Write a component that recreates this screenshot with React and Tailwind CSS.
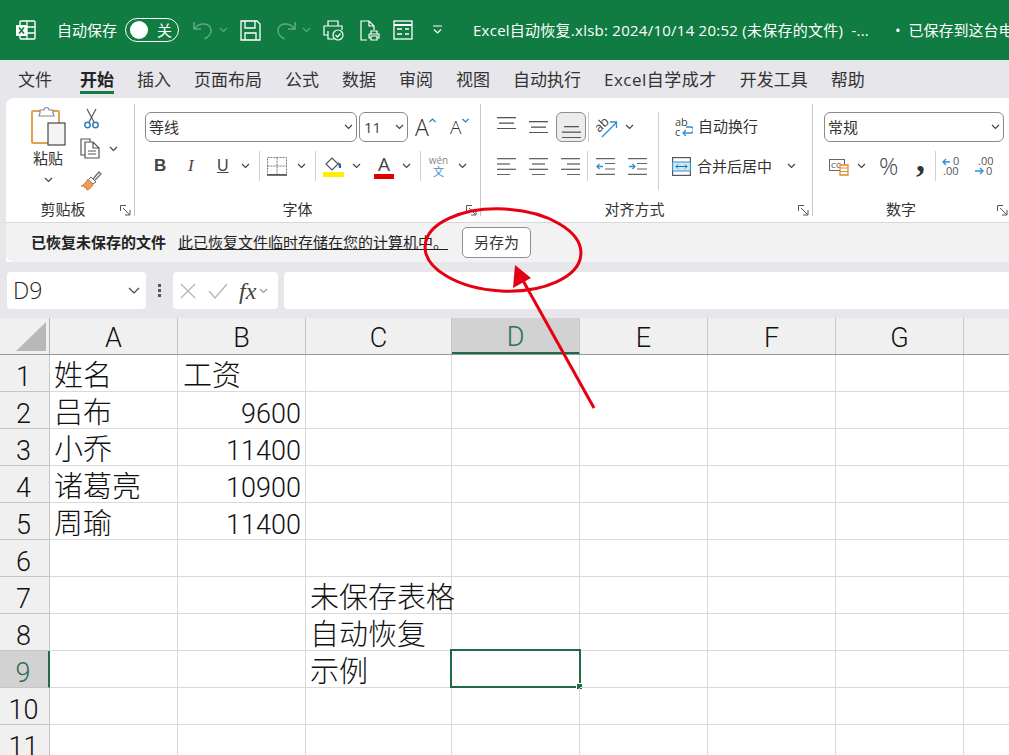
import React from "react";

const columns = ["A", "B", "C", "D", "E", "F", "G", ""];
const rows = [
    {n: 1, a: "姓名", b: "工资"},
    {n: 2, a: "吕布", b: "9600"},
    {n: 3, a: "小乔", b: "11400"},
    {n: 4, a: "诸葛亮", b: "10900"},
    {n: 5, a: "周瑜", b: "11400"},
    {n: 6},
    {n: 7, c: "未保存表格"},
    {n: 8, c: "自动恢复"},
    {n: 9, c: "示例"},
    {n: 10},
    {n: 11}
];
const tabs = ["文件", "开始", "插入", "页面布局", "公式", "数据", "审阅", "视图", "自动执行", "Excel自学成才", "开发工具", "帮助"];
const colWidths = ["w-[128px]", "w-[128px]", "w-[146px]", "w-[128px]", "w-[128px]", "w-[128px]", "w-[128px]", "w-[128px]"];

function Chev({className = "", color = "#444"}) {
    return (
        <svg width="9" height="6" viewBox="0 0 9 6" className={`shrink-0 ${className}`} fill="none">
            <path d="M1 1l3.5 3.5L8 1" stroke={color} strokeWidth="1.2"/>
        </svg>
    );
}

function Lines({widths, className = "", color = "#555", height = 17}) {
    // alignment icons are just stacks of lines
    return (
        <svg width="19" height={height} viewBox={`0 0 19 ${height}`} className={className}>
            {widths.map((l, i) => (
                <rect key={i} x={l[0]} y={i * ((height - 1) / (widths.length - 1))} width={l[1]} height="1.3" fill={color}/>
            ))}
        </svg>
    );
}

function Launcher() {
    return (
        <svg width="11" height="11" viewBox="0 0 11 11" fill="none" stroke="#555">
            <path d="M.5 6V.5H6"/>
            <path d="M3 3l6.5 6.5M10 5v5H5"/>
        </svg>
    );
}

function Group({title, width, children, label, launcher = "mr-[3px]"}) {
    return (
        <div className={`${width} mt-[6px] h-[112px] shrink-0 flex flex-col border-r border-[#c8c8c8] pt-[8px]`}>
            <div className="flex-1 min-h-0 flex">{children}</div>
            <div className={`relative h-[18px] flex items-center justify-center text-[15px] leading-[18px] text-[#333] top-[2px] ${label}`}>
                {title}
                <span className={`absolute right-0 top-[5px] flex ${launcher}`}><Launcher/></span>
            </div>
        </div>
    );
}

function Sep() {
    return <div className="w-px h-[30px] bg-[#d0d0d0] shrink-0"/>;
}

function TitleBar() {
    return (
        <div className="h-[60px] bg-[#107c41] flex items-center text-white text-[15px] whitespace-nowrap overflow-hidden shrink-0">
            <svg width="22" height="22" viewBox="0 0 22 22" className="ml-[15px] shrink-0">
                <rect x="5" y="2" width="15" height="18" rx="1" fill="none" stroke="#fff" strokeWidth="1.4"/>
                <path d="M12 2v18M12 8h8M12 14h8" stroke="#fff" strokeWidth="1.3"/>
                <rect x="1" y="6" width="11" height="11" rx="1" fill="#fff"/>
                <path d="M4 8.500l5 6M9 8.500l-5 6" stroke="#107c41" strokeWidth="1.6"/>
            </svg>
            <span className="ml-[20px] shrink-0">自动保存</span>
            <div className="ml-[8px] w-[54px] h-[24px] rounded-full border border-white flex items-center shrink-0">
                <div className="ml-[4px] w-[18px] h-[18px] rounded-full bg-white"/>
                <span className="ml-[9px] text-[15px]">关</span>
            </div>
            <svg width="20" height="20" viewBox="0 0 20 20" fill="none" stroke="#5fa883" strokeWidth="1.5" className="ml-[14px] shrink-0">
                <path d="M1 2v7h7M1.500 9C5 3 15 2 17.500 8c1.800 5-2 9-6 11"/>
            </svg>
            <Chev className="ml-[6px]" color="#5fa883"/>
            <svg width="21" height="21" viewBox="0 0 21 21" fill="none" stroke="#fff" strokeWidth="1.3" className="ml-[12px] shrink-0">
                <path d="M1 1h16l3 3v16H1z"/>
                <path d="M5 1v7h10V1M5 20v-7h11v7"/>
            </svg>
            <svg width="20" height="20" viewBox="0 0 20 20" fill="none" stroke="#5fa883" strokeWidth="1.5" className="ml-[15px] shrink-0">
                <path d="M19 2v7h-7M18.500 9C15 3 5 2 2.500 8c-1.800 5 2 9 6 11"/>
            </svg>
            <Chev className="ml-[6px]" color="#5fa883"/>
            <svg width="21" height="21" viewBox="0 0 21 21" fill="none" stroke="#fff" strokeWidth="1.2" className="ml-[12px] shrink-0">
                <path d="M5 6V1h10v5M5 15H1V6h18v4M5 11v8h6"/>
                <circle cx="15" cy="15" r="5"/>
                <path d="M12.500 15l2 2 3-3.500"/>
            </svg>
            <svg width="20" height="21" viewBox="0 0 20 21" fill="none" stroke="#fff" strokeWidth="1.2" className="ml-[16px] shrink-0">
                <path d="M7 20H1V1h8l5 5v4M9 1v5h5"/>
                <path d="M9 14h10v4h-2M9 14v4h2M11 11h6v3h-6zM11 16h6v4h-6z"/>
            </svg>
            <svg width="20" height="20" viewBox="0 0 20 20" fill="none" stroke="#fff" strokeWidth="1.3" className="ml-[13px] shrink-0">
                <rect x="1" y="1" width="18" height="18"/>
                <path d="M1 5h18" strokeWidth="2"/>
                <path d="M4 9h5M12 9h4M4 14h5M12 14h4"/>
            </svg>
            <svg width="11" height="10" viewBox="0 0 11 10" fill="none" stroke="#fff" strokeWidth="1.1" className="ml-[19px] shrink-0">
                <path d="M1 1h9M2 4.500l3.500 3.500L9 4.500"/>
            </svg>
            <span className="ml-[30px] shrink-0 tracking-[0.25px]">Excel自动恢复.xlsb: 2024/10/14 20:52 (未保存的文件)&nbsp; -...</span>
            <span className="ml-[26px] shrink-0">•&nbsp; 已保存到这台电脑</span>
        </div>
    );
}

function TabBar() {
    return (
        <div className="h-[38px] pl-[18px] flex gap-[23px] text-[17px] text-[#333] shrink-0 whitespace-nowrap">
            {tabs.map(t => (
                <div
                    key={t}
                    className={
                        t === "开始" ? "relative ml-[5px] pt-[7px] font-bold text-[#222]"
                            : t === "Excel自学成才" ? "pt-[7px] tracking-[0.5px]" : "pt-[7px]"
                    }
                >
                    {t}
                    {t === "开始" && <div className="absolute left-0 right-0 top-[31px] h-[3px] bg-[#107c41]"/>}
                </div>
            ))}
        </div>
    );
}

function Clipboard() {
    return (
        <Group title="剪贴板" width="w-[129px]" label="pr-[14px]">
            <div className="w-[74px] flex flex-col items-center -mt-[6px]">
                <svg width="40" height="40" viewBox="0 0 40 40" className="ml-[10px]">
                    <rect x="4" y="5" width="27" height="32" rx="1" fill="#fff" stroke="#e3a04f" strokeWidth="2"/>
                    <path d="M12 7V4h4a2 2 0 0 1 5 0h4v3l1 3H11z" fill="#fff" stroke="#8a8a8a" strokeWidth="1.2"/>
                    <rect x="20" y="17" width="17" height="22" fill="#f4f4f4" stroke="#555" strokeWidth="1.300"/>
                </svg>
                <span className="ml-[10px] text-[15px] leading-[20px] mt-[2px] text-[#333]">粘贴</span>
                <Chev className="ml-[10px] mt-[9px]"/>
            </div>
            <div className="flex flex-col -mt-[4px]">
                <svg width="18" height="21" viewBox="0 0 18 21" fill="none" className="ml-[3px]">
                    <path d="M4 1l7 13M13 1L6 14" stroke="#555" strokeWidth="1.200"/>
                    <circle cx="4.500" cy="17" r="2.700" stroke="#2f7fb8" strokeWidth="1.500"/>
                    <circle cx="12.500" cy="17" r="2.700" stroke="#2f7fb8" strokeWidth="1.500"/>
                </svg>
                <div className="flex items-center mt-[9px]">
                    <svg width="21" height="21" viewBox="0 0 21 21" fill="none" stroke="#555" strokeWidth="1.200">
                        <path d="M5 17H1V1h9v3"/>
                        <path d="M5 4h8l6 6v10H5zM13 4v6h6M8 13h8M8 16h8"/>
                    </svg>
                    <Chev className="ml-[8px]"/>
                </div>
                <svg width="22" height="21" viewBox="0 0 22 21" fill="none" className="mt-[11px]">
                    <path d="M13 9l6-7 2 2-6 6" fill="#fff" stroke="#666" strokeWidth="1.200"/>
                    <path d="M11 7l5 5-3 2-5-4z" fill="#fff" stroke="#666"/>
                    <path d="M8 9l5 6c-2 3-5 5-6 5l-1-3-1 1-1-2-3 0c3-1 5-4 7-7z" fill="#ef9b5a" stroke="#d97a32"/>
                </svg>
            </div>
        </Group>
    );
}

function Font() {
    return (
        <Group title="字体" width="w-[346px]" label="pr-[20px]">
            <div className="flex-1 flex flex-col">
                <div className="flex items-center h-[30px]">
                    <div className="ml-[10px] w-[212px] h-[30px] rounded-[6px] border border-[#8a8a8a] flex items-center justify-between pl-[3px] pr-[3px] text-[15px] text-[#333]">
                        等线<Chev/>
                    </div>
                    <div className="ml-[2px] w-[49px] h-[30px] rounded-[6px] border border-[#8a8a8a] flex items-center justify-between pl-[4px] pr-[3px] text-[15px] text-[#444]">
                        11<Chev/>
                    </div>
                    <span className="ml-[7px] w-[14px] text-[23px] font-light leading-[30px] text-[#333]">A</span>
                    <svg width="7" height="5" viewBox="0 0 7 5" fill="none" stroke="#2f7fb8" strokeWidth="1.200" className="mb-[14px]"><path d="M.5 4l3-3 3 3"/></svg>
                    <span className="ml-[14px] w-[12px] text-[19px] font-light leading-[30px] text-[#333]">A</span>
                    <svg width="7" height="5" viewBox="0 0 7 5" fill="none" stroke="#2f7fb8" strokeWidth="1.200" className="mb-[14px]"><path d="M.5 1l3 3 3-3"/></svg>
                </div>
                <div className="flex items-center h-[30px] mt-[9px] text-[#444]">
                    <span className="ml-[19px] w-[11px] text-[17px] font-bold font-['Liberation_Sans',sans-serif]">B</span>
                    <span className="ml-[23px] w-[8px] text-[17px] italic font-['Liberation_Serif',serif]">I</span>
                    <span className="ml-[21px] w-[12px] text-[16px] underline font-['Liberation_Sans',sans-serif]">U</span>
                    <Chev className="ml-[12px]"/>
                    <div className="ml-[9px]"><Sep/></div>
                    <svg width="20" height="19" viewBox="0 0 20 19" fill="none" stroke="#777" strokeWidth="1" strokeDasharray="2 1" className="ml-[7px]">
                        <path d="M.5.500h19v17H.5zM10 .500v17M.5 9h19"/>
                        <path d="M0 18h20" strokeDasharray="none" stroke="#444" strokeWidth="1.300"/>
                    </svg>
                    <Chev className="ml-[10px]"/>
                    <div className="ml-[9px]"><Sep/></div>
                    <svg width="21" height="21" viewBox="0 0 21 21" className="ml-[7px]">
                        <path d="M3 8l6-6 6 6-6 6z" fill="#fff" stroke="#555" strokeWidth="1.200"/>
                        <path d="M15 6l3 2 0 4h-2z" fill="#1f5fa8"/>
                        <rect x="0" y="16" width="21" height="5" fill="#ffee00"/>
                    </svg>
                    <Chev className="ml-[8px]"/>
                    <div className="ml-[13px] w-[20px] h-[25px] flex flex-col items-center">
                        <span className="text-[19px] leading-[20px] text-[#444]">A</span>
                        <div className="w-[20px] h-[5px] bg-[#e00000]"/>
                    </div>
                    <Chev className="ml-[8px]"/>
                    <div className="ml-[9px]"><Sep/></div>
                    <div className="ml-[8px] w-[19px] flex flex-col items-center leading-none text-[#888]">
                        <span className="text-[10px] leading-[11px]">wén</span>
                        <span className="text-[11px] leading-[12px] text-[#3b8ec9]">文</span>
                    </div>
                    <Chev className="ml-[10px]"/>
                </div>
            </div>
        </Group>
    );
}

function Alignment() {
    return (
        <Group title="对齐方式" width="w-[332px]" label="pr-[24px]">
            <div className="flex-1 flex">
                <div className="w-[178px] shrink-0 flex flex-col border-r border-[#d0d0d0] h-[78px]">
                    <div className="flex items-center h-[30px]">
                        <Lines height={12} className="ml-[16px] mb-[9px]" widths={[[0, 19], [2, 15], [0, 19]]}/>
                        <Lines height={12} className="ml-[13px]" widths={[[0, 19], [2, 15], [0, 19]]}/>
                        <div className="ml-[8px] w-[30px] h-[30px] rounded-[6px] border border-[#8f8f8f] bg-[#ececec] flex items-center justify-center">
                            <Lines height={12} className="mt-[9px]" widths={[[2, 15], [0, 19], [0, 19]]}/>
                        </div>
                        <div className="ml-[2px]"><Sep/></div>
                        <svg width="22" height="22" viewBox="0 0 22 22" fill="none" className="ml-[7px]">
                            <text x="-1" y="13" fontSize="13" fill="#444" transform="rotate(-45 6 10)">ab</text>
                            <path d="M6 21L20 7M14 6h6.500v6" stroke="#2f8fd0" strokeWidth="1.300"/>
                        </svg>
                        <Chev className="ml-[7px]"/>
                    </div>
                    <div className="flex items-center h-[30px] mt-[9px]">
                        <Lines className="ml-[16px]" widths={[[0, 19], [0, 13], [0, 19], [0, 13]]} color="#666"/>
                        <Lines className="ml-[13px]" widths={[[0, 19], [3, 13], [0, 19], [3, 13]]} color="#666"/>
                        <Lines className="ml-[13px]" widths={[[0, 19], [6, 13], [0, 19], [6, 13]]} color="#666"/>
                        <div className="ml-[7px]"><Sep/></div>
                        <svg width="19" height="17" viewBox="0 0 19 17" fill="none" className="ml-[8px]">
                            <path d="M0 .600h19M9 5.500h10M9 11h10M0 16.400h19" stroke="#666" strokeWidth="1.200"/>
                            <path d="M7 8.500H1M3.500 6L1 8.500 3.500 11" stroke="#2f8fd0" strokeWidth="1.300"/>
                        </svg>
                        <svg width="19" height="17" viewBox="0 0 19 17" fill="none" className="ml-[13px]">
                            <path d="M0 .600h19M9 5.500h10M9 11h10M0 16.400h19" stroke="#666" strokeWidth="1.200"/>
                            <path d="M1 8.500h6M4.500 6L7 8.500 4.500 11" stroke="#2f8fd0" strokeWidth="1.300"/>
                        </svg>
                    </div>
                </div>
                <div className="flex-1 flex flex-col text-[15px] text-[#333]">
                    <div className="flex items-center h-[30px]">
                        <svg width="18" height="21" viewBox="0 0 18 21" fill="none" className="ml-[16px]">
                            <text x="0" y="9" fontSize="11" fill="#444">ab</text>
                            <text x="0" y="19" fontSize="11" fill="#444">c</text>
                            <path d="M11 10h4.500a2.500 2.500 0 0 1 0 6H8M11 13l-3 3 3 3" stroke="#2f8fd0" strokeWidth="1.300"/>
                        </svg>
                        <span className="ml-[5px] -mt-[1px]">自动换行</span>
                    </div>
                    <div className="flex items-center h-[30px] mt-[9px]">
                        <svg width="19" height="19" viewBox="0 0 19 19" fill="none" className="ml-[13px]">
                            <rect x=".6" y=".6" width="17.800" height="17.800" fill="#fff" stroke="#555" strokeWidth="1.200"/>
                            <rect x=".6" y="5" width="17.800" height="9" fill="#cfe6f5" stroke="#2f8fd0"/>
                            <path d="M4 9.500h11M6 7.500l-2 2 2 2M13 7.500l2 2-2 2" stroke="#1f6fa8"/>
                        </svg>
                        <span className="ml-[6px]">合并后居中</span>
                        <Chev className="ml-[15px]"/>
                    </div>
                </div>
            </div>
        </Group>
    );
}

function NumberGroup() {
    return (
        <Group title="数字" width="w-[197px]" label="pr-[20px]" launcher="mr-[1px]">
            <div className="flex-1 flex flex-col">
                <div className="ml-[11px] w-[180px] h-[30px] rounded-[6px] border border-[#8a8a8a] flex items-center justify-between pl-[3px] pr-[3px] text-[15px] text-[#333]">
                    常规<Chev/>
                </div>
                <div className="flex items-center h-[30px] mt-[9px] text-[#444]">
                    <svg width="20" height="19" viewBox="0 0 20 19" fill="none" className="ml-[16px]">
                        <rect x=".5" y="2.500" width="15" height="11" fill="#fff" stroke="#666"/>
                        <text x="2" y="11" fontSize="8" fill="#444">CC</text>
                        <path d="M11 8h8v10h-8z" fill="#fff" stroke="#e08a2e" strokeWidth="1.300"/>
                        <path d="M11 11h8M11 14.500h8" stroke="#e08a2e"/>
                    </svg>
                    <Chev className="ml-[8px]"/>
                    <span className="ml-[13px] w-[19px] text-[24px] font-light leading-none">%</span>
                    <span className="ml-[18px] w-[10px] h-[30px] text-[36px] leading-[16px] font-bold font-['Liberation_Serif',serif] text-[#333]">,</span>
                    <div className="ml-[9px]"><Sep/></div>
                    <svg width="22" height="20" viewBox="0 0 22 20" fill="none" className="ml-[6px]">
                        <path d="M8 6H1M4 3L1 6l3 3" stroke="#2f8fd0" strokeWidth="1.300"/>
                        <text x="11" y="9" fontSize="11" fill="#555">0</text>
                        <text x="1" y="19" fontSize="11" fill="#555">.00</text>
                    </svg>
                    <svg width="22" height="20" viewBox="0 0 22 20" fill="none" className="ml-[10px]">
                        <text x="4" y="9" fontSize="11" fill="#555">.00</text>
                        <path d="M1 15h8M6 12l3 3-3 3" stroke="#2f8fd0" strokeWidth="1.300"/>
                        <text x="12" y="19" fontSize="11" fill="#555">0</text>
                    </svg>
                </div>
            </div>
        </Group>
    );
}

function MessageBar() {
    return (
        <div className="h-[40px] bg-[#f2f2f2] border-t border-[#d8d8d8] rounded-bl-lg flex items-center text-[15px] text-[#222] whitespace-nowrap">
            <b className="ml-[25px] font-bold">已恢复未保存的文件</b>
            <span className="ml-[12px] underline">此已恢复文件临时存储在您的计算机中。</span>
            <button className="ml-[14px] w-[69px] h-[31px] rounded-[5px] bg-white border border-[#8f8f8f] text-[#333]">另存为</button>
        </div>
    );
}

function FormulaBar() {
    return (
        <div className="h-[56px] shrink-0 flex items-start pt-[10px] pl-[7px]">
            <div className="w-[139px] h-[37px] rounded-[4px] bg-white flex items-center justify-between pl-[6px] pr-[6px] text-[23px] font-light text-[#222]">
                D9
                <svg width="12" height="7" viewBox="0 0 12 7" fill="none" stroke="#444" strokeWidth="1.200"><path d="M1 1l5 5 5-5"/></svg>
            </div>
            <div className="w-[27px] h-[37px] flex flex-col items-center justify-center gap-[2px]">
                <i className="w-[3px] h-[3px] bg-[#555]"/>
                <i className="w-[3px] h-[3px] bg-[#555]"/>
                <i className="w-[3px] h-[3px] bg-[#555]"/>
            </div>
            <div className="w-[105px] h-[37px] rounded-[4px] bg-white flex items-center">
                <svg width="16" height="16" viewBox="0 0 16 16" fill="none" stroke="#b5b5b5" strokeWidth="1.300" className="ml-[7px]"><path d="M1 1l14 14M15 1L1 15"/></svg>
                <svg width="20" height="16" viewBox="0 0 20 16" fill="none" stroke="#b5b5b5" strokeWidth="1.300" className="ml-[12px]"><path d="M1 8l6 7L19 1"/></svg>
                <span className="ml-[11px] text-[24px] italic leading-none font-['Liberation_Serif',serif] text-[#444]">fx</span>
                <Chev className="ml-[3px]" color="#999"/>
            </div>
            <div className="ml-[6px] flex-1 h-[37px] rounded-l-[4px] bg-white"/>
        </div>
    );
}

function Sheet() {
    return (
        <div className="flex-1 bg-white overflow-hidden font-['Roboto','Noto_Sans_CJK_SC',sans-serif] font-light text-[27px] text-[#111]">
            <div className="flex h-[37px] bg-[#f0f0f0] border-b border-[#9a9a9a]">
                <div className="w-[50px] shrink-0 flex items-end justify-end pr-[3px] pb-[3px] border-r border-[#b5b5b5]">
                    <div className="w-[30px] h-[29px] bg-[#b8b8b8] [clip-path:polygon(100%_0,100%_100%,0_100%)]"/>
                </div>
                {columns.map((c, i) => (
                    <div
                        key={i}
                        className={`${colWidths[i]} shrink-0 flex items-center justify-center pt-[4px] border-r border-[#c6c6c6] ${c === "D" ? "bg-[#d2d2d2] text-[#2c6e4f] border-b-[2px] border-b-[#1f6b45]" : ""}`}
                    >
                        {c}
                    </div>
                ))}
            </div>
            {rows.map(r => (
                <div key={r.n} className="flex h-[37px]">
                    <div className={`w-[50px] shrink-0 flex items-center justify-center pt-[8px] border-b border-[#c6c6c6] ${r.n === 9 ? "bg-[#d2d2d2] text-[#2c6e4f] border-r-[2px] border-r-[#1f6b45]" : "bg-[#f0f0f0] border-r border-[#9a9a9a]"}`}>
                        <span className="pr-[2px]">{r.n}</span>
                    </div>
                    {colWidths.map((w, i) => (
                        <div key={i} className={`${w} relative shrink-0 flex items-center pt-[8px] border-r border-b border-[#d9d9d9]`}>
                            {i === 0 && r.a && <span className="pl-[4px] text-[29px]">{r.a}</span>}
                            {i === 1 && r.b && (
                                Number(r.b)
                                    ? <span className="w-full pr-[4px] text-right">{r.b}</span>
                                    : <span className="pl-[5px] text-[29px]">{r.b}</span>
                            )}
                            {i === 2 && r.c && <span className="pl-[4px] text-[29px] whitespace-nowrap">{r.c}</span>}
                            {i === 3 && r.n === 9 && (
                                <div className="absolute -left-[2px] -top-[2px] -right-[2px] -bottom-[1px] border-2 border-[#1f6b45]">
                                    <div className="absolute -right-[4px] -bottom-[4px] w-[5px] h-[5px] bg-[#1f6b45] border border-white box-content"/>
                                </div>
                            )}
                        </div>
                    ))}
                </div>
            ))}
        </div>
    );
}

export default function App() {
    return (
        <div className="relative w-[1009px] h-[755px] overflow-hidden flex flex-col bg-[#e6e6eb] font-['Open_Sans','Noto_Sans_CJK_SC',sans-serif]">
            <TitleBar/>
            <TabBar/>
            <div className="ml-[6px] rounded-tl-lg bg-white shrink-0 overflow-hidden">
                <div className="flex h-[124px]">
                    <Clipboard/>
                    <Font/>
                    <Alignment/>
                    <NumberGroup/>
                </div>
                <MessageBar/>
            </div>
            <FormulaBar/>
            <Sheet/>

            {/* red annotation drawn on top of the screenshot */}
            <svg className="absolute inset-0 pointer-events-none" width="1009" height="755" viewBox="0 0 1009 755" fill="none">
                <ellipse cx="503" cy="250" rx="78" ry="41" stroke="#e60012" strokeWidth="3" transform="rotate(3 503 250)"/>
                <path d="M594 408L521 277" stroke="#e60012" strokeWidth="3"/>
                <path d="M515 265L531 278L513 288Z" fill="#e60012"/>
            </svg>
        </div>
    );
}
